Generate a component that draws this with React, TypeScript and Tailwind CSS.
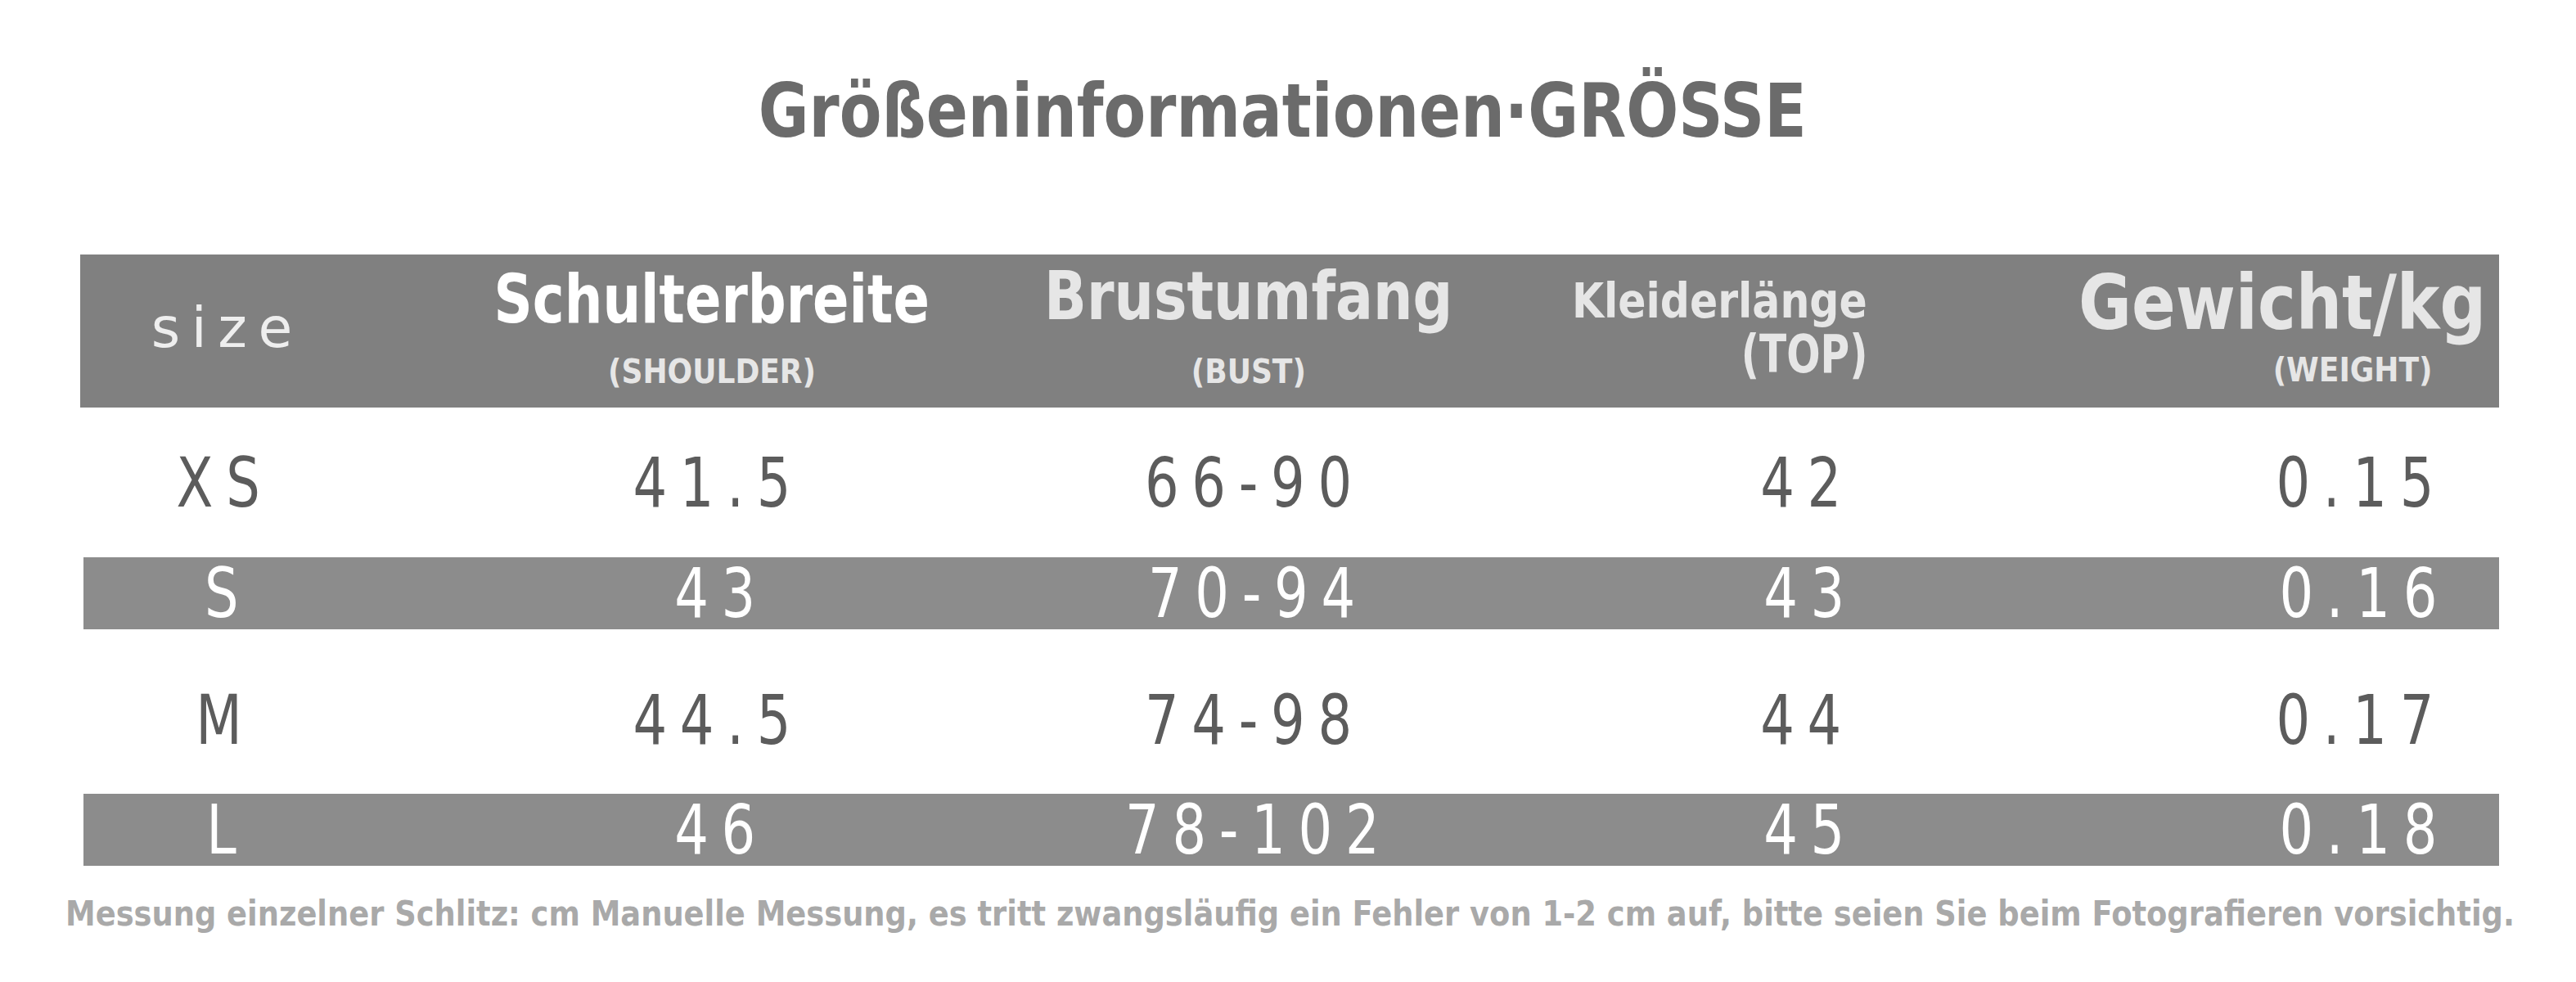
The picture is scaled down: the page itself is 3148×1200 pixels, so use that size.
import React from 'react';

const FONT = { fontFamily: '"DejaVu Sans", "Liberation Sans", sans-serif' };

type Row = { size: string; shoulder: string; bust: string; top: string; weight: string; band: boolean };

const rows: Row[] = [
    { size: 'XS', shoulder: '41.5', bust: '66-90', top: '42', weight: '0.15', band: false },
    { size: 'S', shoulder: '43', bust: '70-94', top: '43', weight: '0.16', band: true },
    { size: 'M', shoulder: '44.5', bust: '74-98', top: '44', weight: '0.17', band: false },
    { size: 'L', shoulder: '46', bust: '78-102', top: '45', weight: '0.18', band: true },
];

// column widths chosen so that each column's centre sits where the picture has it
const COLS = 'grid grid-cols-[334px_876px_436px_914px_396px]';

const Cell: React.FC<{ children: React.ReactNode; className?: string }> = ({ children, className = '' }) => (
    <div className={`flex justify-center ${className}`}>
        <span className="inline-block scale-x-[0.78] tracking-[0.24em] pl-[0.24em]">{children}</span>
    </div>
);

const DataRow: React.FC<{ row: Row; className: string }> = ({ row, className }) => {
    const tone = row.band ? 'bg-[#8c8c8c] text-white ml-[4px]' : 'text-[#5c5c5c]';
    return (
        <div className={`${COLS} ${className} ${tone} items-center text-[84px] leading-none whitespace-nowrap`}>
            <Cell className="pl-[4px]">{row.size}</Cell>
            <Cell>{row.shoulder}</Cell>
            <Cell>{row.bust}</Cell>
            <Cell>{row.top}</Cell>
            <Cell className="pl-[44px]">{row.weight}</Cell>
        </div>
    );
};

const App: React.FC = () => {
    return (
        <div className="w-[3148px] h-[1200px] bg-white overflow-hidden" style={FONT}>
            {/* Titel */}
            <div className="pt-[91px] pr-[14px] flex justify-center">
                <h1 className="inline-block scale-x-[0.837] text-[90px] leading-none font-bold text-[#6b6b6b] whitespace-nowrap">
                    Größeninformationen·GRÖSSE
                </h1>
            </div>

            {/* Tabelle */}
            <div className="mt-[130px] ml-[98px] w-[2956px]">
                <div className={`${COLS} h-[187px] bg-[#808080] whitespace-nowrap`}>
                    <div className="flex justify-center pt-[56px] pl-[12px]">
                        <span className="inline-block text-[68px] leading-none tracking-[0.2em] pl-[0.2em] text-[#eeeeee]">
                            size
                        </span>
                    </div>

                    <div className="flex flex-col items-center pt-[14px]">
                        <span className="inline-block scale-x-[0.8] text-[82px] leading-none font-bold text-white">
                            Schulterbreite
                        </span>
                        <span className="inline-block scale-x-[0.9] mt-[27px] text-[40px] leading-none font-bold text-[#e6e6e6]">
                            (SHOULDER)
                        </span>
                    </div>

                    <div className="flex flex-col items-center pt-[10px]">
                        <span className="inline-block scale-x-[0.83] text-[82px] leading-none font-bold text-[#e6e6e6]">
                            Brustumfang
                        </span>
                        <span className="inline-block scale-x-[0.9] mt-[31px] text-[40px] leading-none font-bold text-[#e6e6e6]">
                            (BUST)
                        </span>
                    </div>

                    <div className="flex flex-col items-end pt-[28px] pr-[376px]">
                        <span className="inline-block origin-right scale-x-[0.87] text-[58px] leading-none font-bold text-[#e6e6e6]">
                            Kleiderlänge
                        </span>
                        <span className="inline-block origin-right scale-x-[0.76] mt-[4px] text-[64px] leading-none font-bold text-[#e6e6e6]">
                            (TOP)
                        </span>
                    </div>

                    <div className="flex flex-col items-end pt-[14px] pr-[16px]">
                        <span className="inline-block origin-right scale-x-[0.86] text-[92px] leading-none font-bold text-[#e6e6e6]">
                            Gewicht/kg
                        </span>
                        <span className="inline-block origin-right scale-x-[0.9] mt-[15px] mr-[66px] text-[40px] leading-none font-bold text-[#e6e6e6]">
                            (WEIGHT)
                        </span>
                    </div>
                </div>

                <DataRow row={rows[0]} className="h-[183px]" />
                <DataRow row={rows[1]} className="h-[88px]" />
                <DataRow row={rows[2]} className="h-[201px] pt-[20px]" />
                <DataRow row={rows[3]} className="h-[88px]" />
            </div>

            {/* Hinweis */}
            <div className="mt-[38px] pl-[80px]">
                <p className="inline-block origin-left scale-x-[0.877] text-[42px] leading-none font-bold text-[#a9a9a9] whitespace-nowrap">
                    Messung einzelner Schlitz: cm Manuelle Messung, es tritt zwangsläufig ein Fehler von 1-2 cm auf, bitte seien Sie beim Fotografieren vorsichtig.
                </p>
            </div>
        </div>
    );
};

export default App;
